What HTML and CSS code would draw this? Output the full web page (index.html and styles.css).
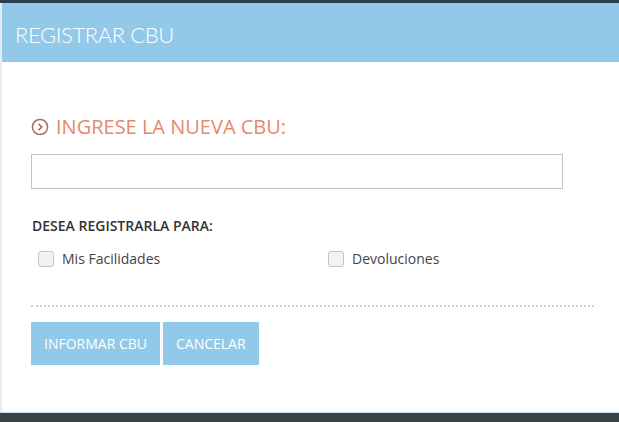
FILE: index.html
```html
<!DOCTYPE html>
<html>

<head>
    <title>Registrar CBU</title>
    <link rel="stylesheet" href="styles.css">
</head>

<body>
    <div class="top-strip"></div>

    <div class="modal">
        <div class="modal-header">
            <h2>REGISTRAR CBU</h2>
        </div>

        <form class="modal-body">
            <h3 class="section-title">
                <svg class="chevron" viewBox="0 0 18 18" width="18" height="18">
                    <circle cx="9" cy="9" r="7.6" fill="none" stroke="currentColor" stroke-width="1.5" />
                    <path d="M7.6 5.9 L10.7 9 L7.6 12.1" fill="none" stroke="currentColor" stroke-width="1.7" />
                </svg>
                INGRESE LA NUEVA CBU:
            </h3>

            <input type="text" class="cbu-input" name="cbu">

            <p class="label">DESEA REGISTRARLA PARA:</p>

            <div class="options">
                <label class="option"><span class="box"></span>Mis Facilidades</label>
                <label class="option"><span class="box"></span>Devoluciones</label>
            </div>

            <div class="actions">
                <button type="submit" class="btn">INFORMAR CBU</button>
                <button type="button" class="btn">CANCELAR</button>
            </div>
        </form>
    </div>

    <div class="bottom-bar"></div>
</body>

</html>
```

FILE: styles.css
```css
body {
    margin: 0;
    font-family: "Open Sans", Arial, sans-serif;
    background-color: #ffffff;
    height: 422px;
    display: flex;
    flex-direction: column;
    overflow: hidden;
}

.top-strip {
    height: 3px;
    background-color: #2d3f4c;
}

.modal {
    flex: 1;
    display: flex;
    flex-direction: column;
    border-left: 2px solid #e6eef2;
}

.modal-header {
    height: 59px;
    background-color: #93c9e8;
    display: flex;
    align-items: center;
    padding-left: 13px;
}

.modal-header h2 {
    margin: 0 0 -3px 0;
    color: #ffffff;
    font-family: Lato, "Open Sans", Arial, sans-serif;
    font-size: 22px;
    font-weight: 300;
    letter-spacing: -0.4px;
}

.modal-body {
    flex: 1;
    padding: 52px 25px 0 29px;
}

.section-title {
    display: flex;
    align-items: center;
    gap: 7px;
    margin: 0 0 14px 0;
    color: #e5896c;
    font-size: 20px;
    font-weight: 400;
    line-height: 26px;
}

.chevron {
    color: #a86e5e;
}

.cbu-input {
    display: block;
    width: 532px;
    height: 35px;
    box-sizing: border-box;
    border: 1px solid #c4c4c4;
    margin: 0 0 27px 0;
}

.label {
    margin: 0 0 14px 1px;
    color: #333333;
    font-size: 14px;
    font-weight: 600;
}

.options {
    display: flex;
    padding-left: 7px;
}

.option {
    flex-shrink: 0;
    width: 290px;
    display: flex;
    align-items: center;
    gap: 8px;
    color: #444444;
    font-size: 14px;
}

.box {
    width: 14px;
    height: 14px;
    border: 1px solid #c6c6c6;
    border-radius: 3px;
    background-color: #f2f2f2;
}

.actions {
    margin-top: 37px;
    padding-top: 15px;
    border-top: 2px dotted #cfcfcf;
    display: flex;
    gap: 3px;
}

.btn {
    height: 43px;
    padding: 0 13px;
    border: none;
    background-color: #93c9e8;
    color: #ffffff;
    font-family: "Open Sans", Arial, sans-serif;
    font-size: 14px;
    font-weight: 400;
}

.bottom-bar {
    height: 9px;
    background-color: #3b4347;
    border-top: 1px solid #c9dde6;
}
```
